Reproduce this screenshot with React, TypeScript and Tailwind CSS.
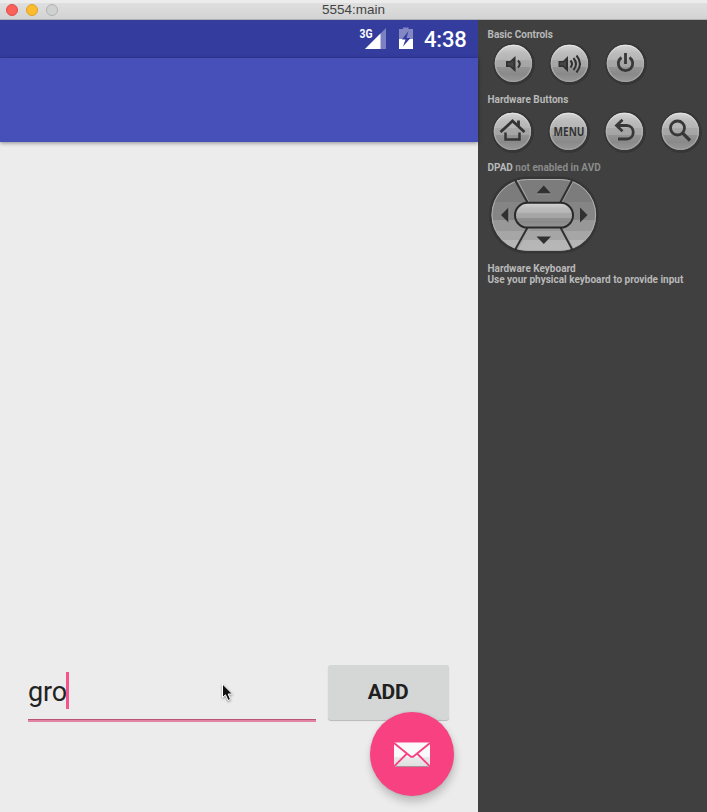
import type { ReactNode } from "react";

function RoundButton({ children }: { children: ReactNode }) {
  return (
    <svg width="44" height="44" viewBox="0 0 44 44" className="shrink-0">
      <circle cx="22" cy="22" r="21" fill="#363636" />
      <circle cx="21.4" cy="21.4" r="18.7" fill="url(#metal)" />
      <circle cx="21.4" cy="21.4" r="18" fill="none" stroke="url(#rim)" strokeWidth="1.2" />
      {children}
    </svg>
  );
}

function Defs() {
  return (
    <svg width="0" height="0" className="absolute">
      <defs>
        <linearGradient id="metal" x1="0" y1="0" x2="0" y2="1">
          <stop offset="0" stopColor="#d6d6d6" />
          <stop offset="0.22" stopColor="#bcbcbc" />
          <stop offset="0.42" stopColor="#b4b4b4" />
          <stop offset="0.42" stopColor="#a8a8a8" />
          <stop offset="0.6" stopColor="#a4a4a4" />
          <stop offset="0.6" stopColor="#939393" />
          <stop offset="0.8" stopColor="#898989" />
          <stop offset="0.8" stopColor="#8c8c8c" />
          <stop offset="1" stopColor="#969696" />
        </linearGradient>
        <linearGradient id="rim" x1="0" y1="0" x2="0" y2="1">
          <stop offset="0" stopColor="#e2e2e2" />
          <stop offset="0.5" stopColor="#b0b0b0" />
          <stop offset="1" stopColor="#a0a0a0" />
        </linearGradient>
        <linearGradient id="pad" x1="0" y1="0" x2="0" y2="1">
          <stop offset="0" stopColor="#7c7c7c" />
          <stop offset="0.32" stopColor="#7c7c7c" />
          <stop offset="0.32" stopColor="#858585" />
          <stop offset="0.57" stopColor="#858585" />
          <stop offset="0.57" stopColor="#989898" />
          <stop offset="0.72" stopColor="#989898" />
          <stop offset="0.72" stopColor="#a6a6a6" />
          <stop offset="0.85" stopColor="#a6a6a6" />
          <stop offset="0.85" stopColor="#b5b5b5" />
          <stop offset="1" stopColor="#b8b8b8" />
        </linearGradient>
      </defs>
    </svg>
  );
}

function DPad() {
  return (
    <svg width="114" height="80" viewBox="487 175 114 80" className="ml-[9px] mt-px">
      <rect x="489" y="176.6" width="109.5" height="77" rx="38" fill="#363636" />
      <rect x="491.5" y="179" width="104.6" height="71.8" rx="35.9" fill="url(#pad)" />
      <rect x="492" y="179.5" width="103.6" height="70.8" rx="35.4" fill="none" stroke="#b0b0b0" strokeWidth="1" />
      <g stroke="#a5a5a5" strokeWidth="1">
        <path d="M517.5 180 529 202M573 182 562 202M529 229 518 249M563 229 573 248" />
      </g>
      <g stroke="#303030" strokeWidth="2">
        <path d="M515 180 527.5 202.500M572 180.500 560 203M527.500 227.500 515 250M560.500 227.500 572.500 250" />
      </g>
      <rect x="515" y="202.800" width="58" height="24.800" rx="12.400" fill="url(#metal)" stroke="#292929" strokeWidth="2" />
      <g fill="#303030">
        <path d="M543.800 185.500 551 193.500H536.500ZM536.500 236.500H551L543.800 244ZM508.500 207.500V222.500L501 215ZM580 207.500 587.500 215 580 222.500Z" />
      </g>
      <path d="M536.500 194H551M509 208V222" fill="none" stroke="#989898" strokeWidth="0.800" />
    </svg>
  );
}

function VolumeHigh() {
  return (
    <g fill="none" stroke="#303030" strokeWidth="2">
      <path d="M10.500 19H15L20 14V30L15 25H10.500Z" fill="#303030" stroke="none" />
      <path d="M12 20.500H15.500L18 18V26L15.500 23.500H12Z" fill="#454545" stroke="none" />
      <path d="M22.500 18.500q3 3.500 0 7M25.500 16q5 6 0 12M28.500 13.500q7 8.500 0 17" />
    </g>
  );
}

function Sidebar() {
  return (
    <aside className="flex w-[229px] shrink-0 flex-col overflow-hidden bg-[#404040] pt-[9px] text-[10px] font-bold leading-[12px] text-[#b9b9b9]">
      <div className="whitespace-nowrap pl-[9.5px]">Basic Controls</div>
      <div className="mt-px flex gap-3 pl-[14px]">
        <RoundButton>
          <path d="M14 19H18L23.500 14V30L18 25H14Z" fill="#303030" />
          <path d="M15.500 20.500H18.500L21.500 18V26L18.500 23.500H15.500Z" fill="#454545" />
          <path d="M26 18.500q3.500 3.500 0 7" fill="none" stroke="#303030" strokeWidth="2" />
        </RoundButton>
        <RoundButton><VolumeHigh /></RoundButton>
        <RoundButton>
          <path d="M17.500 15.500A7.200 7.200 0 1 0 25.500 15.500" fill="none" stroke="#383838" strokeWidth="2.800" />
          <path d="M21.500 11V22" stroke="#383838" strokeWidth="2.800" />
        </RoundButton>
      </div>
      <div className="mt-[8px] pl-[9.5px]">Hardware Buttons</div>
      <div className="mt-[4px] flex gap-3 pl-[13px]">
        <RoundButton>
          <path d="M9.500 22 21.500 11 33.500 22M27.500 16V10.500" fill="none" stroke="#343434" strokeWidth="2.800" />
          <path d="M14.500 22.500V29.500H28.500V22.500" fill="none" stroke="#343434" strokeWidth="2.500" />
        </RoundButton>
        <RoundButton>
          <text x="6.500" y="26.200" fill="#333333" className="font-['Open_Sans',sans-serif] text-[11.500px] font-bold" textLength="31" lengthAdjust="spacingAndGlyphs">MENU</text>
        </RoundButton>
        <RoundButton>
          <path d="M19.500 9.800 13.500 15.500 19.500 21.200M14 15.500H23.500C32.500 15.500 32.500 29 23.500 29H15" fill="none" stroke="#383838" strokeWidth="2.800" />
        </RoundButton>
        <RoundButton>
          <circle cx="18.500" cy="18" r="7" fill="none" stroke="#383838" strokeWidth="2.800" />
          <path d="M23.500 23 31 30.500" stroke="#383838" strokeWidth="3.200" />
        </RoundButton>
      </div>
      <div className="mt-[8px] pl-[9.5px]">DPAD <span className="text-[#8b8b8b]">not enabled in AVD</span></div>
      <DPad />
      <div className="mt-[8px] whitespace-nowrap pl-[9.5px] leading-[11px]">
        Hardware Keyboard<br />Use your physical keyboard to provide input
      </div>
    </aside>
  );
}

function StatusBar() {
  return (
    <div className="flex h-[38px] items-start justify-end border-b border-[#3038a0] bg-[#343d9e] pr-[12px] text-white">
      <svg width="56" height="24" viewBox="359 26 56 24" className="mt-[6px]">
        <text x="359.500" y="37.500" fill="#ffffff" textLength="13" lengthAdjust="spacingAndGlyphs" className="text-[12px] font-bold">3G</text>
        <path d="M386 28V49H365Z" fill="#7b80c0" />
        <path d="M380.500 33.500V49H365Z" fill="#ffffff" />
        <path d="M399 29H403V27.500H408.500V29H413V49H399Z" fill="#8388c4" />
        <path d="M399 39H413V49H399Z" fill="#ffffff" />
        <path d="M408.500 31 402 39.500H405.500L403 46.500 410.500 38H406.500Z" fill="#343d9e" />
      </svg>
      <div className="ml-[9px] mt-[7px] w-[42px] text-[22px] font-medium leading-[26px] tracking-[-0.2px]">4:38</div>
    </div>
  );
}

function Phone() {
  return (
    <main className="relative flex w-[478px] shrink-0 flex-col bg-[#ececec]">
      <StatusBar />
      <div className="h-[84px] bg-[#4650b8] shadow-[0_1px_4px_rgba(0,0,0,0.42)]" />
      <div className="mt-auto flex h-[147px] items-start pl-[28px]">
        <div className="flex h-[57px] w-[288px] items-start border-b-2 border-[#e283a1] shadow-[inset_0_-1px_0_#b8567a]">
          <div className="mt-[11px] w-[39px] text-[27px] leading-[32px] tracking-[-0.2px] text-[#222222]">gro</div>
          <div className="-ml-px mt-[7px] h-[37px] w-[3px] bg-[#f4538b]" />
        </div>
        <div className="ml-[12px] flex h-[55px] w-[121px] items-center justify-center rounded-[3px] bg-[#d5d7d6] pr-px pt-px text-[21px] font-bold tracking-[-0.3px] text-[#202020] shadow-[0_1px_1px_rgba(0,0,0,0.22)]">
          ADD
        </div>
      </div>
      <div className="absolute bottom-[16px] left-[370px] flex size-[84px] items-center justify-center rounded-full bg-[#f74180] shadow-[1px_6px_8px_rgba(0,0,0,0.2),0_0_3px_rgba(0,0,0,0.1)]">
        <svg width="36" height="26" viewBox="0 0 36 26" className="mt-[2px]">
          <defs>
            <linearGradient id="mail" x1="0" y1="0" x2="0" y2="26" gradientUnits="userSpaceOnUse">
              <stop offset="0.55" stopColor="#fafafa" />
              <stop offset="0.6" stopColor="#e9e9e9" />
              <stop offset="1" stopColor="#dddddd" />
            </linearGradient>
          </defs>
          <rect y="0.500" width="36" height="24.500" rx="1" fill="url(#mail)" />
          <path d="M1.500 24.500H34.500" stroke="#a98f98" strokeWidth="1" />
          <path d="M0 1 16 14Q18 15.800 20 14L36 1M0 24.500 12.500 12M36 24.500 23.500 12" fill="none" stroke="#f74180" strokeWidth="1.800" />
        </svg>
      </div>
      <svg width="14" height="20" viewBox="0 0 14 20" className="absolute left-[221px] top-[663px] drop-shadow-[0_1px_1px_rgba(0,0,0,0.4)]">
        <path d="M1.500 1V14.500L4.500 11.800 7 17.500 9.500 16.300 7.200 11H11.500Z" fill="#111111" stroke="#ffffff" strokeWidth="1" />
      </svg>
    </main>
  );
}

export default function App() {
  return (
    <div className="flex h-[812px] w-[707px] flex-col overflow-hidden font-['Roboto',sans-serif]">
      <Defs />
      <header className="flex h-[20px] shrink-0 items-center border-b border-[#b0b2b0] bg-[linear-gradient(#ececec_0_3px,#dfdfdf_3px,#d2d3d2)]">
        <div className="flex w-[80px] gap-[8px] pl-[6px]">
          <i className="size-[12px] rounded-full border border-[#e04b48] bg-[#fa615b]" />
          <i className="size-[12px] rounded-full border border-[#dfa023] bg-[#fbbd2e]" />
          <i className="size-[12px] rounded-full border border-[#b0b2b1] bg-[#d0d2d1]" />
        </div>
        <div className="flex-1 pr-[80px] text-center font-['Liberation_Sans',sans-serif] text-[13.500px] leading-[18px] text-[#444444]">5554:main</div>
      </header>
      <div className="flex flex-1">
        <Phone />
        <Sidebar />
      </div>
    </div>
  );
}
